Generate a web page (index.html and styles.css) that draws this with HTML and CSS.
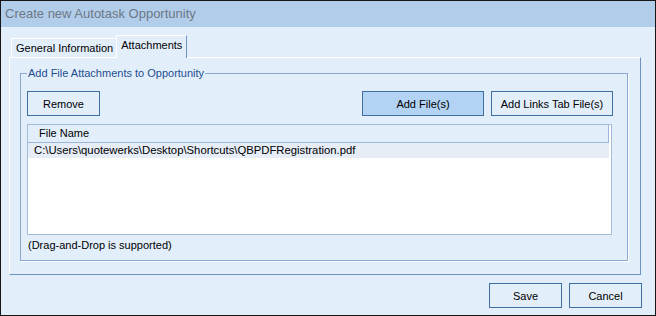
FILE: index.html
```html
<!DOCTYPE html>
<html lang="en">
<head>
  <meta charset="UTF-8">
  <title>Create new Autotask Opportunity</title>
  <link rel="stylesheet" href="styles.css">
</head>
<body>
  <div class="window">
    <div class="titlebar">Create new Autotask Opportunity</div>
    <div class="body">
      <div class="tabs">
        <div class="tab">General Information</div>
        <div class="tab active">Attachments</div>
      </div>
      <div class="panel">
        <fieldset class="group">
          <legend>Add File Attachments to Opportunity</legend>
          <div class="toolbar">
            <button class="btn">Remove</button>
            <span class="spacer"></span>
            <button class="btn wide primary">Add File(s)</button>
            <button class="btn wide">Add Links Tab File(s)</button>
          </div>
          <div class="list">
            <div class="list-head"><span>File Name</span></div>
            <div class="list-row">C:\Users\quotewerks\Desktop\Shortcuts\QBPDFRegistration.pdf</div>
          </div>
          <p class="hint">(Drag-and-Drop is supported)</p>
        </fieldset>
      </div>
    </div>
    <div class="actions">
      <button class="btn">Save</button>
      <button class="btn">Cancel</button>
    </div>
  </div>
</body>
</html>
```

FILE: styles.css
```css
/* Base */
body {
  margin: 0;
  font-family: 'Liberation Sans', Arial, sans-serif;
  font-size: 11px;
  color: #000;
}
.window {
  width: 656px;
  height: 316px;
  box-sizing: border-box;
  border: 1px solid #161616;
  background: #e3eefb;
}
.titlebar {
  height: 26px;
  line-height: 26px;
  padding-left: 4px;
  background: #b2cde9;
  color: #6c7888;
  font-size: 13px;
}
.body {
  padding: 8px 14px 0 8px;
}
/* Tabs */
.tabs {
  display: flex;
  align-items: flex-end;
  height: 22px;
  padding-left: 2px;
}
.tab {
  height: 19px;
  box-sizing: border-box;
  line-height: 18px;
  padding: 0 3px 0 4px;
  border-top: 1px solid #fff;
  border-left: 1px solid #fff;
}
.tab.active {
  position: relative;
  z-index: 1;
  height: 23px;
  margin-bottom: -1px;
  padding: 0 4px;
  line-height: 19px;
  border-right: 1px solid #6f93c0;
  background: #e3eefb;
}
.panel {
  height: 218px;
  box-sizing: border-box;
  border-top: 1px solid #fff;
  border-left: 1px solid #fff;
  border-right: 1px solid #6f93c0;
  border-bottom: 1px solid #6f93c0;
  padding-top: 1px;
}
/* Group box */
.group {
  margin: 7px 12px 0 10px;
  padding: 0 15px 8px 6px;
  min-width: 0;
  border: 1px solid #8aa9cf;
  box-shadow: 1px 1px 0 #fff;
}
.group legend {
  padding: 0 1px;
  line-height: 14px;
  color: #1d4f8f;
}
.toolbar {
  display: flex;
  gap: 7px;
  margin: 11px -1px 0 0;
}
.spacer {
  flex: 1;
}
.btn {
  width: 73px;
  height: 25px;
  box-sizing: border-box;
  padding: 0;
  border: 1px solid #3f6f9f;
  background: #e3eefb;
  font-family: inherit;
  font-size: 11px;
  color: #000;
}
.btn.wide {
  width: 122px;
}
.btn.primary {
  background: #b3d3f5;
}
/* File list */
.list {
  height: 111px;
  box-sizing: border-box;
  margin-top: 8px;
  border: 1px solid #a5bcd8;
  background: #fff;
}
.list-head {
  width: 581px;
  height: 18px;
  box-sizing: border-box;
  line-height: 17px;
  padding-left: 11px;
  background: #e3eefb;
  border-bottom: 1px solid #9bb8da;
  border-right: 1px solid #9bb8da;
}
.list-row {
  width: 581px;
  height: 15px;
  line-height: 15px;
  padding-left: 6px;
  box-sizing: border-box;
  background: #e6edf7;
  font-size: 11.3px;
}
.hint {
  margin: 3px 0 0 1px;
  line-height: 14px;
}
/* Dialog buttons */
.actions {
  display: flex;
  justify-content: flex-end;
  gap: 7px;
  padding: 8px 13px 0 0;
}
```
